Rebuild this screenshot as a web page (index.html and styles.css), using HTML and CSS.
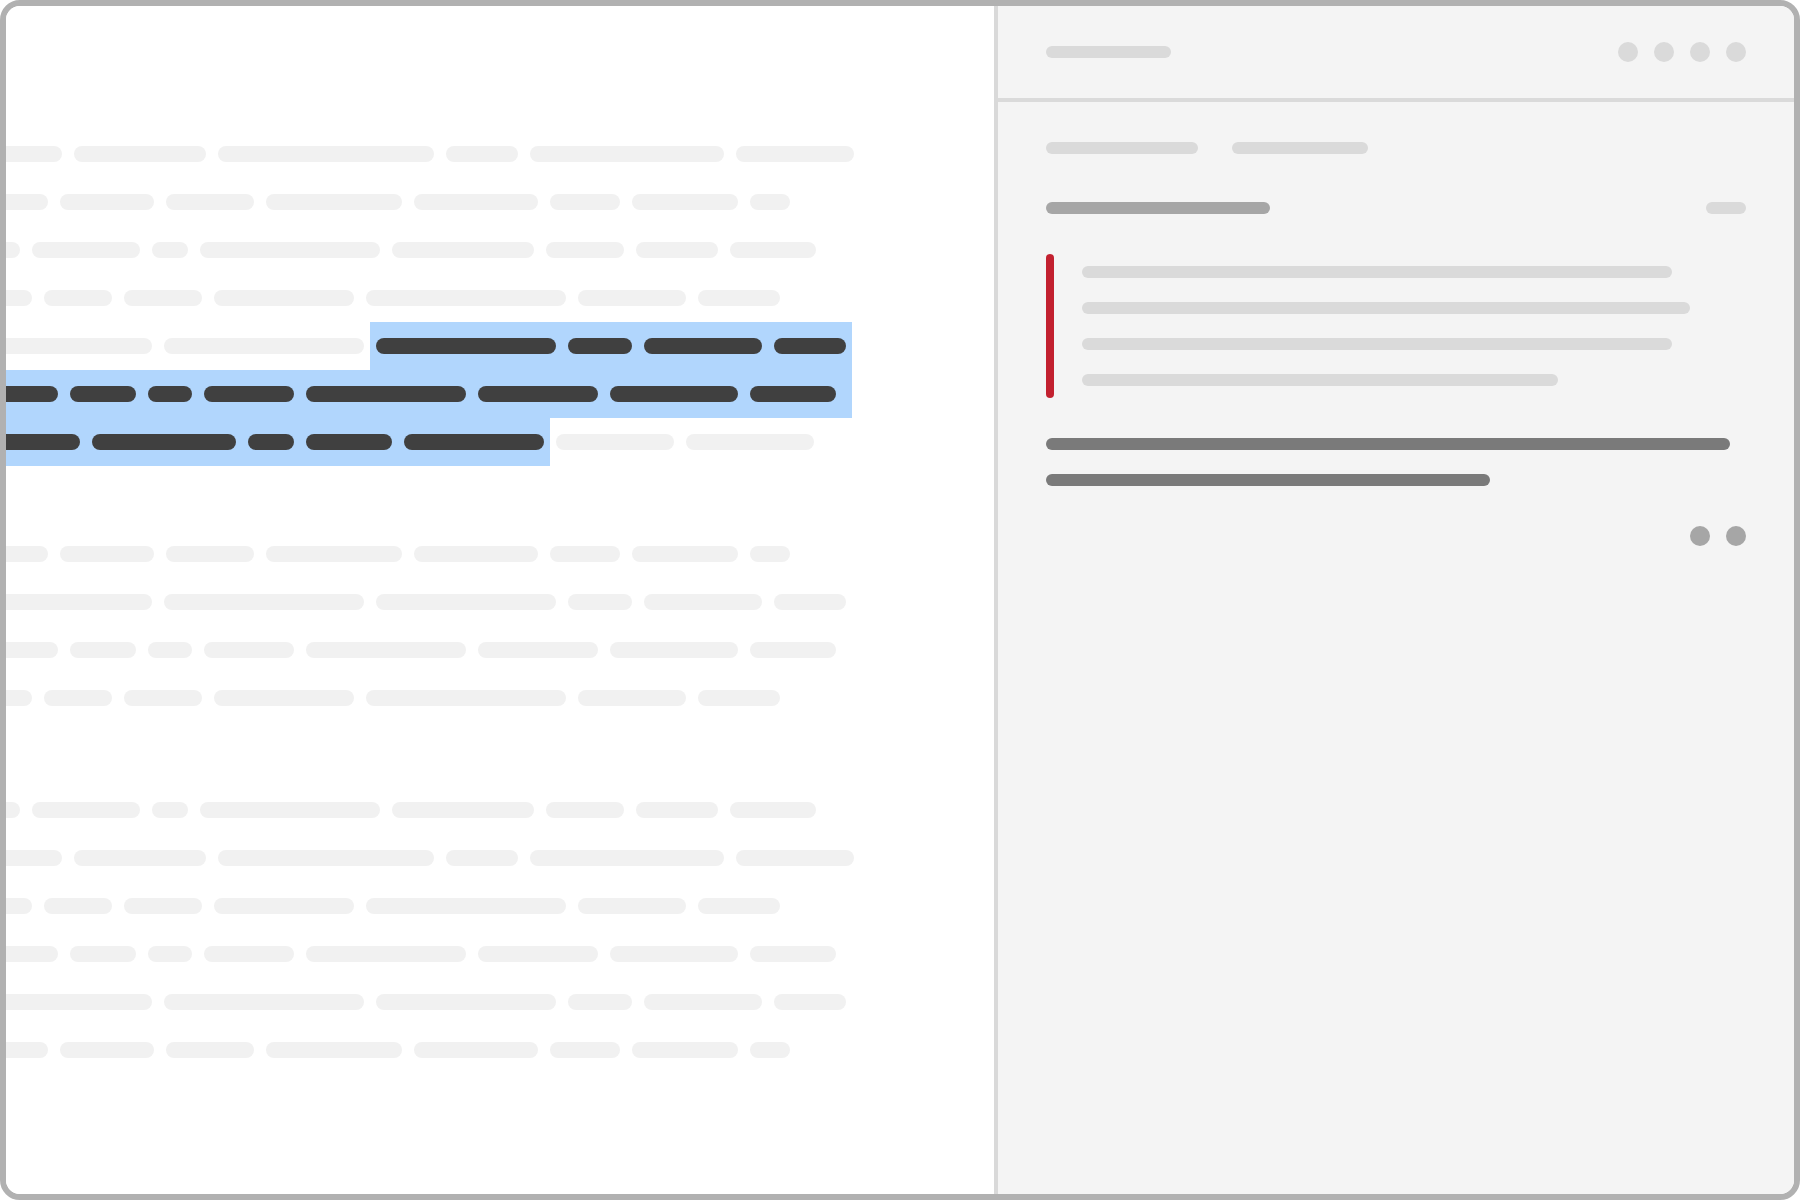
FILE: index.html
```html
<!DOCTYPE html>
<html>
<head>
<meta charset="utf-8">
<title>Document view</title>
<link rel="stylesheet" href="styles.css">
</head>
<body>
<div class="frame">
  <div class="left">
    <div class="doc">
      <div class="para">
        <div class="line"><span class="w"><b style="width:156px"></b></span><span class="w"><b style="width:132px"></b></span><span class="w"><b style="width:216px"></b></span><span class="w"><b style="width:72px"></b></span><span class="w"><b style="width:194px"></b></span><span class="w"><b style="width:118px"></b></span></div>
        <div class="line"><span class="w"><b style="width:142px"></b></span><span class="w"><b style="width:94px"></b></span><span class="w"><b style="width:88px"></b></span><span class="w"><b style="width:136px"></b></span><span class="w"><b style="width:124px"></b></span><span class="w"><b style="width:70px"></b></span><span class="w"><b style="width:106px"></b></span><span class="w"><b style="width:40px"></b></span></div>
        <div class="line"><span class="w"><b style="width:114px"></b></span><span class="w"><b style="width:108px"></b></span><span class="w"><b style="width:36px"></b></span><span class="w"><b style="width:180px"></b></span><span class="w"><b style="width:142px"></b></span><span class="w"><b style="width:78px"></b></span><span class="w"><b style="width:82px"></b></span><span class="w"><b style="width:86px"></b></span></div>
        <div class="line"><span class="w"><b style="width:126px"></b></span><span class="w"><b style="width:68px"></b></span><span class="w"><b style="width:78px"></b></span><span class="w"><b style="width:140px"></b></span><span class="w"><b style="width:200px"></b></span><span class="w"><b style="width:108px"></b></span><span class="w"><b style="width:82px"></b></span></div>
        <div class="line"><span class="w"><b style="width:246px"></b></span><span class="w"><b style="width:200px"></b></span><span class="w s"><b style="width:180px"></b></span><span class="w s"><b style="width:64px"></b></span><span class="w s"><b style="width:118px"></b></span><span class="w s"><b style="width:72px"></b></span></div>
        <div class="line"><span class="w s"><b style="width:152px"></b></span><span class="w s"><b style="width:66px"></b></span><span class="w s"><b style="width:44px"></b></span><span class="w s"><b style="width:90px"></b></span><span class="w s"><b style="width:160px"></b></span><span class="w s"><b style="width:120px"></b></span><span class="w s"><b style="width:128px"></b></span><span class="w s"><b style="width:86px"></b></span><span class="eol s"></span></div>
        <div class="line"><span class="w s"><b style="width:174px"></b></span><span class="w s"><b style="width:144px"></b></span><span class="w s"><b style="width:46px"></b></span><span class="w s"><b style="width:86px"></b></span><span class="w s"><b style="width:140px"></b></span><span class="w"><b style="width:118px"></b></span><span class="w"><b style="width:128px"></b></span></div>
      </div>
      <div class="para">
        <div class="line"><span class="w"><b style="width:142px"></b></span><span class="w"><b style="width:94px"></b></span><span class="w"><b style="width:88px"></b></span><span class="w"><b style="width:136px"></b></span><span class="w"><b style="width:124px"></b></span><span class="w"><b style="width:70px"></b></span><span class="w"><b style="width:106px"></b></span><span class="w"><b style="width:40px"></b></span></div>
        <div class="line"><span class="w"><b style="width:246px"></b></span><span class="w"><b style="width:200px"></b></span><span class="w"><b style="width:180px"></b></span><span class="w"><b style="width:64px"></b></span><span class="w"><b style="width:118px"></b></span><span class="w"><b style="width:72px"></b></span></div>
        <div class="line"><span class="w"><b style="width:152px"></b></span><span class="w"><b style="width:66px"></b></span><span class="w"><b style="width:44px"></b></span><span class="w"><b style="width:90px"></b></span><span class="w"><b style="width:160px"></b></span><span class="w"><b style="width:120px"></b></span><span class="w"><b style="width:128px"></b></span><span class="w"><b style="width:86px"></b></span></div>
        <div class="line"><span class="w"><b style="width:126px"></b></span><span class="w"><b style="width:68px"></b></span><span class="w"><b style="width:78px"></b></span><span class="w"><b style="width:140px"></b></span><span class="w"><b style="width:200px"></b></span><span class="w"><b style="width:108px"></b></span><span class="w"><b style="width:82px"></b></span></div>
      </div>
      <div class="para">
        <div class="line"><span class="w"><b style="width:114px"></b></span><span class="w"><b style="width:108px"></b></span><span class="w"><b style="width:36px"></b></span><span class="w"><b style="width:180px"></b></span><span class="w"><b style="width:142px"></b></span><span class="w"><b style="width:78px"></b></span><span class="w"><b style="width:82px"></b></span><span class="w"><b style="width:86px"></b></span></div>
        <div class="line"><span class="w"><b style="width:156px"></b></span><span class="w"><b style="width:132px"></b></span><span class="w"><b style="width:216px"></b></span><span class="w"><b style="width:72px"></b></span><span class="w"><b style="width:194px"></b></span><span class="w"><b style="width:118px"></b></span></div>
        <div class="line"><span class="w"><b style="width:126px"></b></span><span class="w"><b style="width:68px"></b></span><span class="w"><b style="width:78px"></b></span><span class="w"><b style="width:140px"></b></span><span class="w"><b style="width:200px"></b></span><span class="w"><b style="width:108px"></b></span><span class="w"><b style="width:82px"></b></span></div>
        <div class="line"><span class="w"><b style="width:152px"></b></span><span class="w"><b style="width:66px"></b></span><span class="w"><b style="width:44px"></b></span><span class="w"><b style="width:90px"></b></span><span class="w"><b style="width:160px"></b></span><span class="w"><b style="width:120px"></b></span><span class="w"><b style="width:128px"></b></span><span class="w"><b style="width:86px"></b></span></div>
        <div class="line"><span class="w"><b style="width:246px"></b></span><span class="w"><b style="width:200px"></b></span><span class="w"><b style="width:180px"></b></span><span class="w"><b style="width:64px"></b></span><span class="w"><b style="width:118px"></b></span><span class="w"><b style="width:72px"></b></span></div>
        <div class="line"><span class="w"><b style="width:142px"></b></span><span class="w"><b style="width:94px"></b></span><span class="w"><b style="width:88px"></b></span><span class="w"><b style="width:136px"></b></span><span class="w"><b style="width:124px"></b></span><span class="w"><b style="width:70px"></b></span><span class="w"><b style="width:106px"></b></span><span class="w"><b style="width:40px"></b></span></div>
      </div>
    </div>
  </div>
  <div class="right">
    <div class="head">
      <span class="pill title"></span>
      <div class="dots"><i></i><i></i><i></i><i></i></div>
    </div>
    <div class="body">
      <div class="tabs"><span class="pill tab1"></span><span class="pill tab2"></span></div>
      <div class="meta"><span class="pill author"></span><span class="pill time"></span></div>
      <div class="quote">
        <span class="qbar"></span>
        <div class="qlines">
          <span class="pill" style="width:590px"></span>
          <span class="pill" style="width:608px"></span>
          <span class="pill" style="width:590px"></span>
          <span class="pill" style="width:476px"></span>
        </div>
      </div>
      <div class="reply">
        <span class="pill dark" style="width:684px"></span>
        <span class="pill dark" style="width:444px"></span>
      </div>
      <div class="actions"><i></i><i></i></div>
    </div>
  </div>
</div>
</body>
</html>
```

FILE: styles.css
```css
* { box-sizing: border-box; }
html, body { margin: 0; padding: 0; background: #ffffff; }
body { font-family: "Liberation Sans", Arial, sans-serif; }

.frame {
  width: 1800px;
  height: 1200px;
  border: 6px solid #b1b1b1;
  border-radius: 20px;
  display: flex;
  overflow: hidden;
  background: #ffffff;
}

/* left document */
.left {
  width: 988px;
  flex: none;
  overflow: hidden;
  background: #ffffff;
}
.doc {
  margin-left: -106px;
  width: 958px;
  padding-top: 124px;
}
.para { margin-bottom: 64px; }
.line {
  display: flex;
  height: 48px;
}
.w {
  display: flex;
  flex-shrink: 0;
  padding: 16px 6px;
  height: 48px;
}
.w b {
  display: block;
  height: 16px;
  border-radius: 8px;
  background: #f1f1f1;
}
.s { background: #b1d6fd; }
.w.s b { background: #404040; }
.eol { width: 10px; flex: none; }

/* right panel */
.right {
  flex: 1;
  background: #f4f4f4;
  border-left: 4px solid #d9d9d9;
}
.head {
  height: 96px;
  padding: 0 48px;
  border-bottom: 4px solid #dadada;
  display: flex;
  align-items: center;
  justify-content: space-between;
}
.pill {
  display: block;
  height: 12px;
  border-radius: 6px;
  background: #dadada;
}
.title { width: 125px; }
.dots { display: flex; gap: 16px; }
.dots i, .actions i {
  display: block;
  width: 20px;
  height: 20px;
  border-radius: 50%;
  background: #dadada;
}
.body { padding: 40px 48px; }
.tabs { display: flex; gap: 34px; }
.tab1 { width: 152px; }
.tab2 { width: 136px; }
.meta {
  margin-top: 48px;
  display: flex;
  justify-content: space-between;
  align-items: center;
}
.author { width: 224px; background: #a6a6a6; }
.time { width: 40px; }
.quote {
  margin-top: 40px;
  display: flex;
}
.qbar {
  width: 8px;
  border-radius: 4px;
  background: #c2202f;
  flex: none;
}
.qlines {
  margin-left: 28px;
  padding: 12px 0;
  display: flex;
  flex-direction: column;
  gap: 24px;
}
.reply {
  margin-top: 40px;
  display: flex;
  flex-direction: column;
  gap: 24px;
}
.pill.dark { background: #7a7a7a; }
.actions {
  margin-top: 40px;
  display: flex;
  justify-content: flex-end;
  gap: 16px;
}
.actions i { background: #a6a6a6; }
```
